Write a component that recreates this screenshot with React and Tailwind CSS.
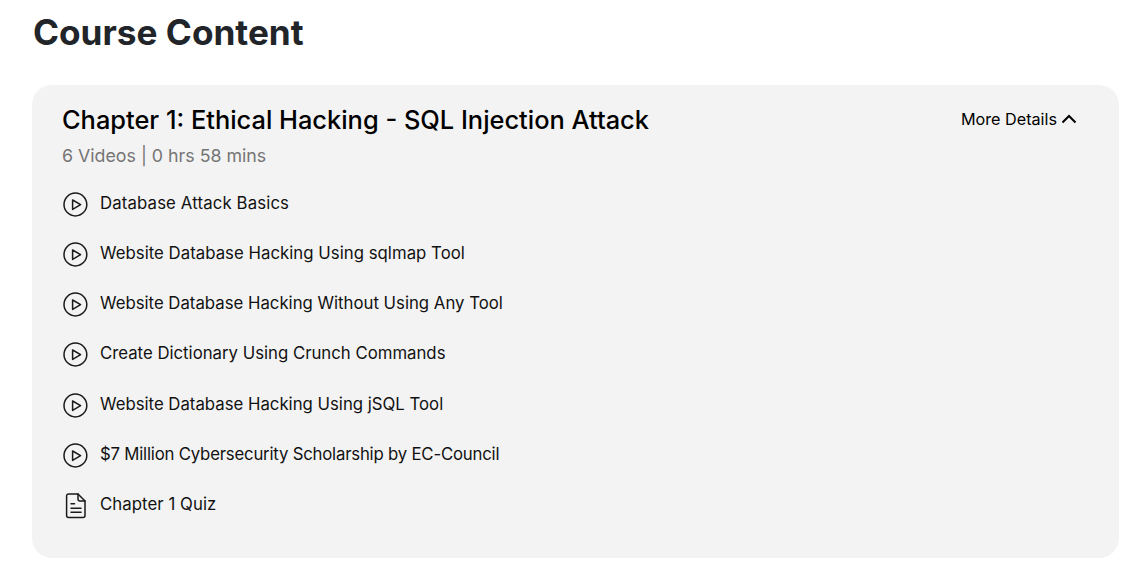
import React from "react";

const lessons = [
  { title: "Database Attack Basics", tracking: "tracking-[0.14px]" },
  { title: "Website Database Hacking Using sqlmap Tool", tracking: "tracking-[0.03px]" },
  { title: "Website Database Hacking Without Using Any Tool", tracking: "tracking-normal" },
  { title: "Create Dictionary Using Crunch Commands", tracking: "tracking-normal" },
  { title: "Website Database Hacking Using jSQL Tool", tracking: "tracking-normal" },
  { title: "$7 Million Cybersecurity Scholarship by EC-Council", tracking: "tracking-[-0.2px]" },
];

const PlayIcon = () => (
  <svg width="26" height="26" viewBox="0 0 26 26" fill="none" stroke="#1a1a1a" strokeWidth="1.5" strokeLinejoin="round" className="shrink-0">
    <circle cx="13.4" cy="13.5" r="11.4" />
    <path d="M10.6 9v9.4l8-4.7z" />
  </svg>
);

const QuizIcon = () => (
  <svg width="26" height="26" viewBox="0 0 26 26" fill="none" stroke="#1a1a1a" strokeWidth="1.5" strokeLinecap="round" strokeLinejoin="round" className="shrink-0 overflow-visible">
    <path d="M4.6 4a2 2 0 0 1 2-2h9.4l7 7v14.5a2 2 0 0 1-2 2H6.6a2 2 0 0 1-2-2z" />
    <path d="M16 2v5a2 2 0 0 0 2 2h5" />
    <path d="M9 11.7h3.5M9 16.3h10M9 20.3h10" />
  </svg>
);

const Row = ({ icon, title, tracking }) => (
  <div className="flex items-center h-[26px] gap-[12px] mb-[24.2px]">
    {icon}
    <span className={`text-[16.75px] text-[#111] -mt-[1px] ${tracking}`}>{title}</span>
  </div>
);

const App = () => {
  return (
    <div className="h-[564px] overflow-hidden bg-white pl-[32px] pr-[3px] pt-[10px] font-['Inter',sans-serif]">
      <h1 className="text-[35.2px] leading-[44px] font-bold text-[#212529] mb-[31px] pl-[1px]">Course Content</h1>

      <div className="bg-[#f3f3f3] rounded-[20px] h-[473px] pl-[30px] pr-[42px] pt-[18px]">
        <div className="flex justify-between items-start">
          <h2 className="text-[25.4px] leading-[34px] font-medium text-black">
            Chapter 1: Ethical Hacking - SQL Injection Attack
          </h2>
          <button className="flex items-center gap-[4px] text-[16.2px] leading-[32px] text-black">
            More Details
            <svg width="16" height="10" viewBox="0 0 16 10" fill="none" stroke="#000" strokeWidth="2" className="-mt-[1px]">
              <path d="M1.5 8.5L8 2l6.5 6.5" />
            </svg>
          </button>
        </div>
        <p className="text-[17.8px] leading-[26px] text-[#757575] mt-[6px] mb-[21.85px]">6 Videos | 0 hrs 58 mins</p>
        {lessons.map((lesson) => (
          <Row key={lesson.title} icon={<PlayIcon />} title={lesson.title} tracking={lesson.tracking} />
        ))}
        <Row icon={<QuizIcon />} title="Chapter 1 Quiz" tracking="tracking-[0.07px]" />
      </div>
    </div>
  );
};

export default App;
